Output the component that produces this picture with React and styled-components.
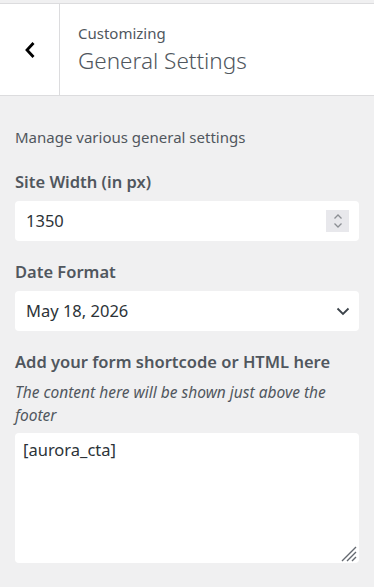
import React from 'react'
import styled, { createGlobalStyle } from 'styled-components'

const GlobalStyle = createGlobalStyle`
  html, body {
    margin: 0;
    padding: 0;
    background: #f0f0f1;
  }
  body {
    font-family: "Noto Sans", "Open Sans", sans-serif;
    color: #50575e;
  }
`

const Panel = styled.div`
  width: 374px;
  min-height: 587px;
  background: #f0f0f1;
  padding-top: 3px;
  box-sizing: border-box;
`

const Header = styled.div`
  display: flex;
  height: 93px;
  background: #fff;
  border-top: 1px solid #dcdcde;
  border-bottom: 1px solid #dcdcde;
  box-sizing: border-box;
`

const BackButton = styled.button`
  width: 60px;
  flex: 0 0 60px;
  display: flex;
  align-items: center;
  justify-content: center;
  padding: 0;
  border: none;
  border-right: 1px solid #dcdcde;
  background: #fff;
  color: #000;
  cursor: pointer;
`

const Titles = styled.div`
  display: flex;
  flex-direction: column;
  padding: 18px 0 0 18px;
`

const Eyebrow = styled.span`
  font-size: 15px;
  line-height: 22px;
  color: #50575e;
`

const Title = styled.h2`
  margin: 3px 0 0;
  font-size: 22.5px;
  font-weight: 300;
  line-height: 28px;
  color: #50575e;
`

const Body = styled.div`
  display: flex;
  flex-direction: column;
  padding: 30px 15px 20px;
`

const Intro = styled.p`
  margin: 0 0 23px;
  font-size: 15px;
  line-height: 22px;
  color: #50575e;
`

const Field = styled.div`
  display: flex;
  flex-direction: column;
  margin-bottom: 20px;
`

const Label = styled.label`
  font-size: 16.5px;
  font-weight: 600;
  line-height: 22px;
  color: #50575e;
  margin-bottom: 8px;
`

const Hint = styled.p`
  margin: 0 0 6px;
  font-size: 15.5px;
  font-style: italic;
  line-height: 23px;
  color: #50575e;
`

const Box = styled.div`
  position: relative;
  display: flex;
  height: ${p => p.$tall ? '130px' : '40px'};
  align-items: ${p => p.$tall ? 'flex-start' : 'center'};
  padding: ${p => p.$tall ? '6px 8px' : '0 9px 0 11px'};
  box-sizing: border-box;
  background: #fff;
  border-radius: 4px;
  font-size: 16.5px;
  line-height: 22px;
  color: #2c3338;
`

const Value = styled.span`
  flex: 1;
`

const Spinner = styled.span`
  width: 23px;
  height: 22px;
  margin-right: 1px;
  display: flex;
  align-items: center;
  justify-content: center;
  background: #e8e8ec;
`

const Grip = styled.svg`
  position: absolute;
  right: 2px;
  bottom: 1px;
`

const App = () => (
  <>
    <GlobalStyle />
    <Panel>
      <Header>
        <BackButton aria-label="Back">
          <svg width="12" height="18" viewBox="0 0 12 18">
            <path d="M9.5 2 L3 9 L9.5 16" fill="none" stroke="#000" strokeWidth="2.8" />
          </svg>
        </BackButton>
        <Titles>
          <Eyebrow>Customizing</Eyebrow>
          <Title>General Settings</Title>
        </Titles>
      </Header>
      <Body>
        <Intro>Manage various general settings</Intro>
        <Field>
          <Label>Site Width (in px)</Label>
          <Box>
            <Value>1350</Value>
            <Spinner>
              <svg width="10" height="16" viewBox="0 0 10 16">
                <path d="M1.5 5.5 L5 2 L8.5 5.5 M1.5 10.5 L5 14 L8.5 10.5" fill="none" stroke="#8c8f94" strokeWidth="1.3" />
              </svg>
            </Spinner>
          </Box>
        </Field>
        <Field>
          <Label>Date Format</Label>
          <Box>
            <Value>May 18, 2026</Value>
            <svg width="14" height="9" viewBox="0 0 14 9">
              <path d="M1.5 1.5 L7 7 L12.5 1.5" fill="none" stroke="#3c434a" strokeWidth="1.8" />
            </svg>
          </Box>
        </Field>
        <Field>
          <Label>Add your form shortcode or HTML here</Label>
          <Hint>The content here will be shown just above the footer</Hint>
          <Box $tall>
            <Value>[aurora_cta]</Value>
            <Grip width="17" height="17" viewBox="0 0 17 17">
              <path d="M16 2 L2 16 M16 7 L7 16 M16 12 L12 16" stroke="#646970" strokeWidth="1.4" />
            </Grip>
          </Box>
        </Field>
      </Body>
    </Panel>
  </>
)

export default App
